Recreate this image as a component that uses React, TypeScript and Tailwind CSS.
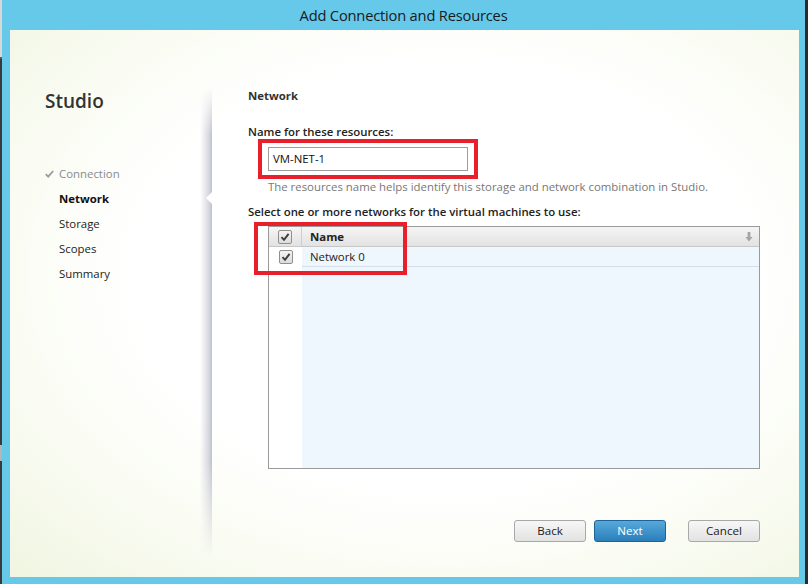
import React from "react";

const FONT = { fontFamily: '"Open Sans", "Noto Sans", Arial, sans-serif' };

function CheckBox() {
  return (
    <div className="w-[14px] h-[14px] border border-[#8f8f8f] rounded-[2px] bg-[linear-gradient(#f4f4f4,#dcdcdc)] flex items-center justify-center">
      <svg width="10" height="10" viewBox="0 0 10 10">
        <path d="M1.5 5.2 L4 7.8 L8.6 1.8" fill="none" stroke="#3c3c3c" strokeWidth="1.9" />
      </svg>
    </div>
  );
}

function Btn({ label, primary }: { label: string; primary?: boolean }) {
  return (
    <div
      className={
        "w-[72px] h-[22px] rounded-[3px] flex items-center justify-center text-[11.6px] " +
        (primary
          ? "border border-[#1d6298] bg-[linear-gradient(#58a9da,#2a7fbb)] text-white"
          : "border border-[#a8a8a8] bg-[linear-gradient(#f7f7f7,#e2e2e2)] text-[#222]")
      }
    >
      {label}
    </div>
  );
}

export default function App() {
  return (
    <div className="w-[808px] h-[584px] flex bg-[#2f2f2f] overflow-hidden" style={FONT}>
      {/* outside strip left */}
      <div className="w-[2px] h-full flex flex-col">
        <div className="h-[57px] bg-[#d8d8d8]" />
        <div className="h-[2px] bg-[#5a5a5a]" />
        <div className="h-[386px] bg-[#3a3a3a]" />
        <div className="h-[16px] bg-[#b5b5b5]" />
        <div className="flex-1 bg-[#3a3a3a]" />
      </div>
      {/* window */}
      <div className="w-[803px] h-full bg-[#66c9ea] flex flex-col">
        <div className="h-[30px] flex items-center justify-center text-[14.7px] text-[#1a1a1a] tracking-[-0.2px]">
          Add Connection and Resources
        </div>
        <div className="ml-[8px] w-[789px] h-[547px] relative bg-[radial-gradient(ellipse_at_55%_45%,#ffffff_50%,#fafcf3_72%,#f0f5e1_100%)] flex text-[#222]">
          {/* left panel */}
          <div className="w-[190px] pl-[35px] pt-[57px] flex flex-col">
            <div className="text-[19px] font-semibold leading-[28px] text-[#333]">Studio</div>
            <div className="mt-[46px] flex flex-col text-[11.4px]">
              <div className="h-[25px] flex items-center text-[#8a8a8a]">
                <svg width="9" height="8" viewBox="0 0 9 8" className="mr-[5px]">
                  <path d="M0.8 4.2 L3.2 6.6 L8.2 1" fill="none" stroke="#9a9a9a" strokeWidth="1.8" />
                </svg>
                Connection
              </div>
              <div className="h-[25px] flex items-center pl-[14px] font-bold text-[#111]">Network</div>
              <div className="h-[25px] flex items-center pl-[14px]">Storage</div>
              <div className="h-[25px] flex items-center pl-[14px]">Scopes</div>
              <div className="h-[25px] flex items-center pl-[14px]">Summary</div>
            </div>
          </div>
          {/* shadow column */}
          <div className="w-[12px] relative">
            <div className="absolute left-0 right-0 top-[58px] bottom-[20px] bg-[linear-gradient(90deg,rgba(200,202,212,0)_0%,rgba(190,193,205,0.6)_70%,#bfc2cd_100%)] [mask-image:linear-gradient(transparent,black_10%,black_80%,transparent)]" />
            <div className="absolute right-0 top-[162px] w-0 h-0 border-y-[6px] border-y-transparent border-r-[6px] border-r-white" />
          </div>
          {/* right panel */}
          <div className="flex-1 pl-[36px] pt-[58px] flex flex-col text-[11.4px]">
            <div className="leading-[16px] font-bold text-[#333]">Network</div>
            <div className="mt-[20px] leading-[16px] font-semibold text-[#222]">Name for these resources:</div>
            <div className="mt-[7px] ml-[20px] w-[200px] h-[24px] border border-[#9d9d9d] bg-white flex items-center pl-[4px] text-[#111]">
              VM-NET-1
            </div>
            <div className="mt-[8px] ml-[20px] leading-[16px] text-[#777]">
              The resources name helps identify this storage and network combination in Studio.
            </div>
            <div className="mt-[9px] leading-[16px] font-semibold text-[#222]">
              Select one or more networks for the virtual machines to use:
            </div>
            <div className="mt-[6px] ml-[20px] w-[492px] h-[243px] border border-[#9a9a9a] flex flex-col bg-white">
              <div className="h-[20px] flex bg-[linear-gradient(#f5f5f5,#e2e2e2)] border-b border-[#c8c8c8]">
                <div className="w-[33px] flex items-center justify-center border-r border-[#cfcfcf]">
                  <CheckBox />
                </div>
                <div className="flex-1 flex items-center pl-[8px] font-bold text-[#222]">Name</div>
                <div className="w-[20px] flex items-center justify-center">
                  <svg width="8" height="10" viewBox="0 0 8 10">
                    <path d="M2.6 0 H5.4 V5 H7.6 L4 9.6 L0.4 5 H2.6 Z" fill="#a5a5a5" />
                  </svg>
                </div>
              </div>
              <div className="flex-1 flex">
                <div className="w-[33px] flex flex-col">
                  <div className="h-[20px] flex items-center justify-center">
                    <CheckBox />
                  </div>
                </div>
                <div className="flex-1 bg-[#eef6fe] flex flex-col">
                  <div className="h-[20px] border-b border-[#d4dfea] flex items-center pl-[8px] text-[#222]">
                    Network 0
                  </div>
                </div>
              </div>
            </div>
            <div className="mt-[51px] ml-[266px] flex">
              <Btn label="Back" />
              <div className="ml-[8px]">
                <Btn label="Next" primary />
              </div>
              <div className="ml-[22px]">
                <Btn label="Cancel" />
              </div>
            </div>
          </div>
          {/* annotation boxes */}
          <div className="absolute left-[248px] top-[109px] w-[220px] h-[40px] border-[4px] border-[#e8202b]" />
          <div className="absolute left-[244px] top-[192px] w-[153px] h-[53px] border-[4px] border-[#e8202b]" />
        </div>
        <div className="flex-1" />
      </div>
      <div className="flex-1 bg-[#2b2b2b]" />
    </div>
  );
}
